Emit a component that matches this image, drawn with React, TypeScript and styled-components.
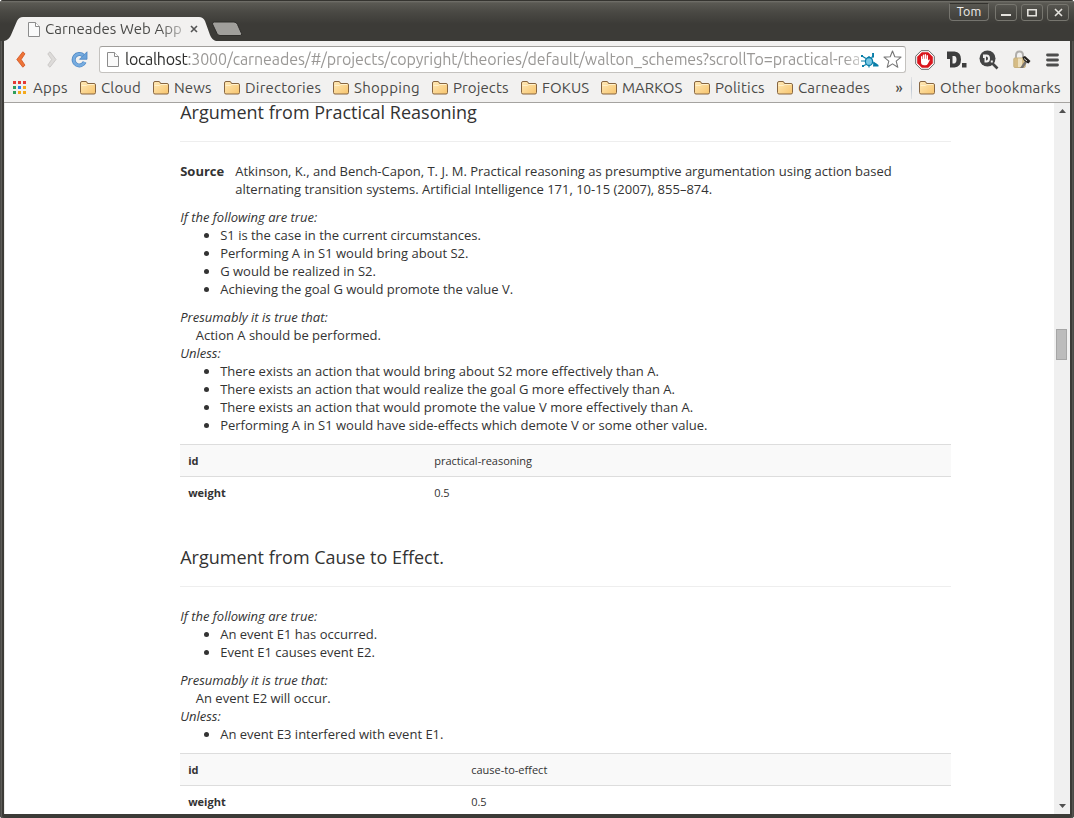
import React from "react";
import styled, { createGlobalStyle } from "styled-components";

const GlobalStyle = createGlobalStyle`
  * { box-sizing: border-box; }
  html, body { margin: 0; padding: 0; background: #fff; overflow: hidden; }
`;

const chromeFont = `Ubuntu, "Noto Sans", "Open Sans", sans-serif`;

const Window = styled.div`
  width: 1074px;
  height: 818px;
  display: flex;
  flex-direction: column;
  padding: 0 4px 4px;
  background: #3c3b37;
  border-radius: 4px 4px 3px 3px;
  box-shadow: inset 1px 0 0 #4b4a47, inset 2px 0 0 #5d5c58, inset -1px 0 0 #4b4a47, inset -2px 0 0 #55544f;
  overflow: hidden;
`;

const TitleBar = styled.header`
  height: 41px;
  margin: 0 -4px;
  padding: 0 5px 0 8px;
  flex: none;
  display: flex;
  align-items: flex-end;
  background: linear-gradient(#353430 0, #353430 1px, #74736d 1px, #5a5953 3px, #4a4944 12px, #3c3b37 24px, #3c3b37 100%);
`;

const Tab = styled.div`
  position: relative;
  width: 206px;
  height: 24px;
  display: flex;
  align-items: center;
  padding-left: 20px;
  font: 15px/20px ${chromeFont};
  color: #4a4a48;
`;

const TabShape = styled.svg`
  position: absolute;
  left: -4px;
  top: 0;
`;

const TabTitle = styled.span`
  position: relative;
  width: 138px;
  margin-left: 5px;
  white-space: nowrap;
  overflow: hidden;
  letter-spacing: 0.08px;
  mask-image: linear-gradient(to right, #000 114px, rgba(0, 0, 0, 0.35) 137px);
`;

const Glyph = styled.svg`
  position: relative;
  display: block;
  flex: none;
`;

const NewTab = styled.svg`
  margin: 0 0 4px -3px;
`;

const WindowButtons = styled.div`
  margin-left: auto;
  align-self: flex-start;
  display: flex;
  align-items: flex-end;
  gap: 4px;
  padding-top: 3px;
`;

const UserButton = styled.div`
  width: 40px;
  height: 18px;
  margin-right: 2px;
  border: 1px solid #75746e;
  border-top-color: #33322e;
  border-radius: 0 0 4px 4px;
  color: #f2f1ee;
  font: 12.5px/15px ${chromeFont};
  text-align: center;
`;

const WinButton = styled.div`
  width: 22px;
  height: 17px;
  border: 1px solid #77766f;
  border-radius: 3px;
  display: flex;
  align-items: center;
  justify-content: center;
`;

const Toolbar = styled.div`
  height: 35px;
  flex: none;
  display: flex;
  align-items: center;
  padding: 2px 11px 0 12px;
  background: #f2f1f0;
`;

const NavIcons = styled.div`
  width: 83px;
  display: flex;
  align-items: center;
  gap: 21px;
`;

const AddressBox = styled.div`
  width: 807px;
  height: 27px;
  display: flex;
  align-items: center;
  padding: 0 3px 0 7px;
  background: #fff;
  border: 1px solid #c4c2bf;
  border-top-color: #a19f9c;
  border-radius: 3px;
`;

const Url = styled.div`
  width: 734px;
  margin: 0 2px 1px 6px;
  overflow: hidden;
  white-space: nowrap;
  font: 16px/24px ${chromeFont};
  letter-spacing: -0.09px;
  color: #9a9896;
  mask-image: linear-gradient(to right, #000 718px, rgba(0, 0, 0, 0.5) 734px);
  b { font-weight: 400; color: #2d2d2c; letter-spacing: -0.3px; }
`;

const Extensions = styled.div`
  flex: 1;
  display: flex;
  align-items: center;
  padding-left: 9px;
`;

const BookmarkBar = styled.nav`
  height: 27px;
  flex: none;
  display: flex;
  align-items: center;
  padding: 0 0 3px 8px;
  background: #f2f1f0;
  border-bottom: 1px solid #a5a3a0;
`;

const Bookmark = styled.div<{ $width: number; $spacing: number; $gap?: number }>`
  width: ${(p) => p.$width}px;
  flex: none;
  display: flex;
  align-items: center;
  gap: ${(p) => p.$gap ?? 5}px;
  white-space: nowrap;
  font: 15px/20px ${chromeFont};
  letter-spacing: ${(p) => p.$spacing}px;
  color: #4a4a48;
`;

const More = styled.div`
  width: 18px;
  text-align: center;
  margin-left: 1px;
  font: 500 14px/18px ${chromeFont};
  color: #4a4a48;
`;

const Divider = styled.div`
  width: 1px;
  height: 22px;
  margin: 0 7px 0 3px;
  background: linear-gradient(#e3e3e4, #bcc6d2, #e3e3e4);
`;

const Viewport = styled.div`
  flex: 1;
  min-height: 0;
  display: flex;
  background: #fff;
  border-left: 1px solid #eceae8;
`;

const Page = styled.main`
  flex: 1;
  overflow: hidden;
  padding-left: 175.2px;
  font: 13px/18px "Open Sans", sans-serif;
  color: #333;
`;

const Scheme = styled.section`
  width: 771px;
  margin: -9px 0 40px;
`;

const Title = styled.h3`
  margin: 0 0 20px;
  height: 48px;
  border-bottom: 1px solid #eee;
  font-size: 18px;
  font-weight: 400;
  line-height: 36px;
`;

const Source = styled.div`
  display: flex;
  margin-bottom: 10px;
  b { width: 55px; flex: none; }
  span { width: 690px; }
`;

const Label = styled.div`
  font-style: italic;
`;

const Conclusion = styled.div`
  padding-left: 15.6px;
`;

const List = styled.ul`
  margin: 0 0 10px;
  padding-left: 40px;
`;

const Props = styled.div`
  font-size: 11px;
`;

const PropRow = styled.div<{ $shaded?: boolean; $keyWidth: number }>`
  display: grid;
  grid-template-columns: ${(p) => p.$keyWidth}px 1fr;
  height: 32px;
  padding: 7px 8px 0;
  border-top: 1px solid #ddd;
  background: ${(p) => (p.$shaded ? "#f9f9f9" : "#fff")};
`;

const Scrollbar = styled.aside`
  width: 16px;
  display: flex;
  flex-direction: column;
  align-items: center;
  padding: 6px 0 6px;
  background: #f0f0f0;
`;

const Thumb = styled.div`
  width: 11px;
  height: 31px;
  margin: 216px 0 auto -1px;
  background: #bcbcbc;
  border: 1px solid #a6a6a6;
`;

const PageIcon = () => (
  <Glyph width="12" height="15" viewBox="0 0 12 15">
    <path d="M.5.5h7l4 4v10H.5z" fill="#fafafa" stroke="#8c8c8c" />
    <path d="M7.5.5v4h4" fill="#fff" stroke="#8c8c8c" />
  </Glyph>
);

const Folder = () => (
  <Glyph width="16" height="14" viewBox="0 0 16 14">
    <defs>
      <linearGradient id="folder" x1="0" y1="0" x2="1" y2="1">
        <stop offset="0" stopColor="#ffe9b8" />
        <stop offset="1" stopColor="#f7c46c" />
      </linearGradient>
    </defs>
    <path d="M.5 11.500V2Q.5.5 2 .5H6Q7 .5 7.500 2.500H14Q15.500 2.500 15.500 4V11.500Q15.500 13 14 13H2Q.5 13 .5 11.500z" fill="url(#folder)" stroke="#876642" />
    <path d="M1.500 4.500h5l1.400-1h6.500" fill="none" stroke="#fff1cc" />
  </Glyph>
);

const appColors = ["#e53935", "#e53935", "#e53935", "#2e9e5b", "#2b7de9", "#f4a91c", "#2e9e5b", "#f4a91c", "#f4a91c"];

const AppsIcon = () => (
  <Glyph width="15" height="14" viewBox="0 0 15 14">
    {appColors.map((c, i) => (
      <rect key={i} x={1 + (i % 3) * 5} y={Math.floor(i / 3) * 5} width="3" height="3" fill={c} />
    ))}
  </Glyph>
);

const bookmarks = [
  { name: "Cloud", width: 73, spacing: 0.15 },
  { name: "News", width: 71, spacing: 0.1 },
  { name: "Directories", width: 109, spacing: 0.2 },
  { name: "Shopping", width: 99, spacing: 0.3 },
  { name: "Projects", width: 89, spacing: 0.1 },
  { name: "FOKUS", width: 80, spacing: 0.1 },
  { name: "MARKOS", width: 93, spacing: 0 },
  { name: "Politics", width: 83, spacing: 0.2 },
  { name: "Carneades", width: 112, spacing: 0.12 },
];

type SchemeData = {
  title: string;
  source?: string;
  premises: string[];
  conclusion: string;
  exceptions: string[];
  id: string;
  weight: string;
  keyWidth: number;
};

const schemes: SchemeData[] = [
  {
    title: "Argument from Practical Reasoning",
    source:
      "Atkinson, K., and Bench-Capon, T. J. M. Practical reasoning as presumptive argumentation using action based alternating transition systems. Artificial Intelligence 171, 10-15 (2007), 855–874.",
    premises: [
      "S1 is the case in the current circumstances.",
      "Performing A in S1 would bring about S2.",
      "G would be realized in S2.",
      "Achieving the goal G would promote the value V.",
    ],
    conclusion: "Action A should be performed.",
    exceptions: [
      "There exists an action that would bring about S2 more effectively than A.",
      "There exists an action that would realize the goal G more effectively than A.",
      "There exists an action that would promote the value V more effectively than A.",
      "Performing A in S1 would have side-effects which demote V or some other value.",
    ],
    id: "practical-reasoning",
    weight: "0.5",
    keyWidth: 246,
  },
  {
    title: "Argument from Cause to Effect.",
    premises: ["An event E1 has occurred.", "Event E1 causes event E2."],
    conclusion: "An event E2 will occur.",
    exceptions: ["An event E3 interfered with event E1."],
    id: "cause-to-effect",
    weight: "0.5",
    keyWidth: 283,
  },
];

const Bullets = ({ items }: { items: string[] }) => (
  <List>
    {items.map((t) => (
      <li key={t}>{t}</li>
    ))}
  </List>
);

export default function App() {
  return (
    <>
      <GlobalStyle />
      <Window>
        <TitleBar>
          <Tab>
            <TabShape width="212" height="24" viewBox="0 0 212 24">
              <path d="M0 24Q5 23 7 18L13 4Q15 0 19 0H195Q199 0 201 4L206 18Q208 23 212 24z" fill="#f2f1f0" />
            </TabShape>
            <PageIcon />
            <TabTitle>Carneades Web App</TabTitle>
            <Glyph width="8" height="8" viewBox="0 0 8 8" style={{ marginLeft: 7 }}>
              <path d="M1 1l6 6M7 1L1 7" stroke="#555" strokeWidth="1.6" />
            </Glyph>
          </Tab>
          <NewTab width="32" height="16" viewBox="0 0 32 16">
            <path d="M3.500 1H23q2.500 0 3.500 2.500l4 9q.8 2-1.500 2H9q-2 0-3-2L1.500 3Q1 1 3.500 1z" fill="#a09f9b" stroke="#2f2e2b" />
          </NewTab>
          <WindowButtons>
            <UserButton>Tom</UserButton>
            <WinButton>
              <svg width="10" height="9"><path d="M0 7h10" stroke="#e4e2dd" strokeWidth="2" /></svg>
            </WinButton>
            <WinButton>
              <svg width="10" height="9"><path d="M.8 1.800h8.400v6H.8z" fill="none" stroke="#e4e2dd" strokeWidth="1.600" /></svg>
            </WinButton>
            <WinButton>
              <svg width="9" height="9"><path d="M1 1l7 7M8 1L1 8" stroke="#e4e2dd" strokeWidth="1.600" /></svg>
            </WinButton>
          </WindowButtons>
        </TitleBar>

        <Toolbar>
          <NavIcons>
            <Glyph width="10" height="17" viewBox="0 0 10 17">
              <path d="M6.800.8L9 2.800 5.200 8.500 9 14.200l-2.200 2L.8 8.500z" fill="#ee7437" stroke="#cf5423" strokeWidth=".8" />
            </Glyph>
            <Glyph width="10" height="17" viewBox="0 0 10 17">
              <path d="M3 .8L.8 2.800 4.600 8.500.8 14.200l2.200 2L9 8.500z" fill="#dddbd9" stroke="#c5c3c1" strokeWidth=".8" />
            </Glyph>
            <Glyph width="17" height="17" viewBox="0 0 17 17" style={{ marginLeft: -7 }}>
              <path d="M12.400 4.700A5.700 5.700 0 1 0 13.600 11" fill="none" stroke="#4f87c2" strokeWidth="4" />
              <path d="M12.400 4.700A5.700 5.700 0 1 0 13.600 11" fill="none" stroke="#76ace0" strokeWidth="2.600" />
              <path d="M16 .8v7.500H8.500z" fill="#6ba3da" stroke="#4f87c2" strokeWidth=".8" />
            </Glyph>
          </NavIcons>
          <AddressBox>
            <PageIcon />
            <Url>
              <b>localhost</b>:3000/carneades/#/projects/copyright/theories/default/walton_schemes?scrollTo=practical-rea
            </Url>
            <Glyph width="18" height="16" viewBox="0 0 18 16">
              <ellipse cx="8" cy="9.500" rx="3.600" ry="4" fill="#78c7e4" stroke="#087da8" strokeWidth="1.300" />
              <path d="M1 4l4 2.500M0 9h4.500M5 12.500L2 14M8 5.500V4M10.500 6.500L12.500 2M8 13.500V15.500M11.500 10.500l4 2" fill="none" stroke="#087da8" strokeWidth="1.200" />
              <path d="M11 1h2v4.500h-1.500zM12.500 9.500l5 3.500v1.500H12z" fill="#087da8" />
              <path d="M0 3h2v2H0zM1 13h2v2H1z" fill="#087da8" />
            </Glyph>
            <Glyph width="19" height="19" viewBox="0 0 19 19" style={{ marginLeft: 4 }}>
              <path d="M9.500 1l2.300 5.700 6.200.4-4.800 4 1.600 6.200-5.300-3.400-5.300 3.400 1.600-6.200-4.800-4 6.200-.4z" fill="#fff" stroke="#777" strokeWidth="1.100" strokeLinejoin="round" />
            </Glyph>
          </AddressBox>
          <Extensions>
            <Glyph width="20" height="20" viewBox="0 0 20 20">
              <path d="M6.200.7h7.600l5.500 5.500v7.600l-5.500 5.500H6.200L.7 13.800V6.200z" fill="#fff" stroke="#666" />
              <path d="M6.800 2.200h6.400l4.600 4.600v6.400l-4.600 4.600H6.800l-4.600-4.600V6.800z" fill="#d9151c" />
              <path d="M6 10V6.500q.8-.9 1.300 0V9h.5V5q.8-1 1.400 0v3.800h.5V4.500q.8-1 1.400 0v4.300h.5V5.500q.8-.9 1.400 0v5l1-1q1-.3.900.5l-2.200 4q-.7 1.200-2.200 1.200H9.200Q6 15.200 6 12z" fill="#fff" />
            </Glyph>
            <Glyph width="20" height="17" viewBox="0 0 20 17" style={{ marginLeft: 12, marginTop: -1 }}>
              <path d="M0 .5h7.500q6.500.5 6.500 8t-6.500 8H3V8H0zM5.500 5v7.500H7q2.500-.3 2.500-4T7 5z" fill="#3e3e3e" fillRule="evenodd" />
              <rect x="15" y="12" width="4.500" height="4.500" fill="#3e3e3e" />
            </Glyph>
            <Glyph width="20" height="20" viewBox="0 0 20 20" style={{ marginLeft: 12 }}>
              <path d="M13.500 13.500l5 5" stroke="#444" strokeWidth="2.600" />
              <circle cx="8.500" cy="8.500" r="8" fill="#444" />
              <path d="M4 4.500h3.500q3.500.2 3.500 4t-3.500 4H5.500V8H4zM7 6.500v4q2 0 2-2t-2-2z" fill="#f2f1f0" fillRule="evenodd" />
              <rect x="11.800" y="10.500" width="2" height="2" fill="#f2f1f0" />
            </Glyph>
            <Glyph width="18" height="19" viewBox="0 0 18 19" style={{ marginLeft: 14 }}>
              <path d="M3 9V5.500Q3 1.500 6.500 1.500T10 5.500V9" fill="none" stroke="#b0aeab" strokeWidth="2" />
              <rect x=".8" y="8" width="11.500" height="9.500" rx="1" fill="#d6bc85" stroke="#c7b180" />
              <path d="M5 8.500v8.500h4V8.500z" fill="#eddfbd" />
              <path d="M9.500 7l2.500-1 5.500 5-2 2.500-2.500-1-2.500-2.500z" fill="#24211f" />
              <path d="M11.500 11.500l-4.500 6.500h3l4-5.500z" fill="#77736d" />
              <path d="M11 8.500l3 2.500" stroke="#d8d5d0" />
            </Glyph>
            <Glyph width="13" height="14" viewBox="0 0 13 14" style={{ marginLeft: 15 }}>
              <path d="M1.500 2h10M1.500 7h10M1.500 12h10" stroke="#4d4d4c" strokeWidth="2.800" strokeLinecap="round" />
            </Glyph>
          </Extensions>
        </Toolbar>

        <BookmarkBar>
          <Bookmark $width={68} $spacing={0.2} $gap={6}>
            <AppsIcon />
            Apps
          </Bookmark>
          {bookmarks.map((b) => (
            <Bookmark key={b.name} $width={b.width} $spacing={b.spacing}>
              <Folder />
              {b.name}
            </Bookmark>
          ))}
          <More>»</More>
          <Divider />
          <Bookmark $width={150} $spacing={0.2}>
            <Folder />
            Other bookmarks
          </Bookmark>
        </BookmarkBar>

        <Viewport>
          <Page>
            {schemes.map((s) => (
              <Scheme key={s.id}>
                <Title>{s.title}</Title>
                {s.source && (
                  <Source>
                    <b>Source</b>
                    <span>{s.source}</span>
                  </Source>
                )}
                <Label>If the following are true:</Label>
                <Bullets items={s.premises} />
                <Label>Presumably it is true that:</Label>
                <Conclusion>{s.conclusion}</Conclusion>
                <Label>Unless:</Label>
                <Bullets items={s.exceptions} />
                <Props>
                  <PropRow $shaded $keyWidth={s.keyWidth}>
                    <b>id</b>
                    <span>{s.id}</span>
                  </PropRow>
                  <PropRow $keyWidth={s.keyWidth}>
                    <b>weight</b>
                    <span>{s.weight}</span>
                  </PropRow>
                </Props>
              </Scheme>
            ))}
          </Page>
          <Scrollbar>
            <svg width="7" height="4"><path d="M0 4L3.500 0 7 4z" fill="#505050" /></svg>
            <Thumb />
            <svg width="7" height="4"><path d="M0 0h7L3.500 4z" fill="#505050" /></svg>
          </Scrollbar>
        </Viewport>
      </Window>
    </>
  );
}
